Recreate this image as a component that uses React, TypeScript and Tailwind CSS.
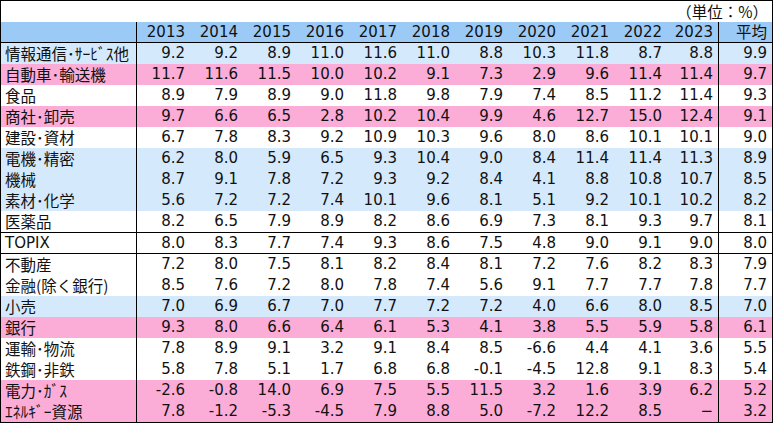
import React from "react";

type Row = { label: string; values: string[]; avg: string; bg: string };

const BLUE = "bg-[#d5e9fc]";
const PINK = "bg-[#fbadd7]";
const WHITE = "bg-white";

const years = ["2013", "2014", "2015", "2016", "2017", "2018", "2019", "2020", "2021", "2022", "2023"];

const topRows: Row[] = [
  { label: "情報通信･ｻｰﾋﾞｽ他", values: ["9.2", "9.2", "8.9", "11.0", "11.6", "11.0", "8.8", "10.3", "11.8", "8.7", "8.8"], avg: "9.9", bg: BLUE },
  { label: "自動車･輸送機", values: ["11.7", "11.6", "11.5", "10.0", "10.2", "9.1", "7.3", "2.9", "9.6", "11.4", "11.4"], avg: "9.7", bg: PINK },
  { label: "食品", values: ["8.9", "7.9", "8.9", "9.0", "11.8", "9.8", "7.9", "7.4", "8.5", "11.2", "11.4"], avg: "9.3", bg: WHITE },
  { label: "商社･卸売", values: ["9.7", "6.6", "6.5", "2.8", "10.2", "10.4", "9.9", "4.6", "12.7", "15.0", "12.4"], avg: "9.1", bg: PINK },
  { label: "建設･資材", values: ["6.7", "7.8", "8.3", "9.2", "10.9", "10.3", "9.6", "8.0", "8.6", "10.1", "10.1"], avg: "9.0", bg: WHITE },
  { label: "電機･精密", values: ["6.2", "8.0", "5.9", "6.5", "9.3", "10.4", "9.0", "8.4", "11.4", "11.4", "11.3"], avg: "8.9", bg: BLUE },
  { label: "機械", values: ["8.7", "9.1", "7.8", "7.2", "9.3", "9.2", "8.4", "4.1", "8.8", "10.8", "10.7"], avg: "8.5", bg: BLUE },
  { label: "素材･化学", values: ["5.6", "7.2", "7.2", "7.4", "10.1", "9.6", "8.1", "5.1", "9.2", "10.1", "10.2"], avg: "8.2", bg: BLUE },
  { label: "医薬品", values: ["8.2", "6.5", "7.9", "8.9", "8.2", "8.6", "6.9", "7.3", "8.1", "9.3", "9.7"], avg: "8.1", bg: WHITE },
];

const topix: Row = { label: "TOPIX", values: ["8.0", "8.3", "7.7", "7.4", "9.3", "8.6", "7.5", "4.8", "9.0", "9.1", "9.0"], avg: "8.0", bg: WHITE };

const bottomRows: Row[] = [
  { label: "不動産", values: ["7.2", "8.0", "7.5", "8.1", "8.2", "8.4", "8.1", "7.2", "7.6", "8.2", "8.3"], avg: "7.9", bg: WHITE },
  { label: "金融(除く銀行)", values: ["8.5", "7.6", "7.2", "8.0", "7.8", "7.4", "5.6", "9.1", "7.7", "7.7", "7.8"], avg: "7.7", bg: WHITE },
  { label: "小売", values: ["7.0", "6.9", "6.7", "7.0", "7.7", "7.2", "7.2", "4.0", "6.6", "8.0", "8.5"], avg: "7.0", bg: BLUE },
  { label: "銀行", values: ["9.3", "8.0", "6.6", "6.4", "6.1", "5.3", "4.1", "3.8", "5.5", "5.9", "5.8"], avg: "6.1", bg: PINK },
  { label: "運輸･物流", values: ["7.8", "8.9", "9.1", "3.2", "9.1", "8.4", "8.5", "-6.6", "4.4", "4.1", "3.6"], avg: "5.5", bg: WHITE },
  { label: "鉄鋼･非鉄", values: ["5.8", "7.8", "5.1", "1.7", "6.8", "6.8", "-0.1", "-4.5", "12.8", "9.1", "8.3"], avg: "5.4", bg: WHITE },
  { label: "電力･ｶﾞｽ", values: ["-2.6", "-0.8", "14.0", "6.9", "7.5", "5.5", "11.5", "3.2", "1.6", "3.9", "6.2"], avg: "5.2", bg: PINK },
  { label: "ｴﾈﾙｷﾞｰ資源", values: ["7.8", "-1.2", "-5.3", "-4.5", "7.9", "8.8", "5.0", "-7.2", "12.2", "8.5", "−"], avg: "3.2", bg: PINK },
];

// Japanese labels and Latin digits use different faces, like the Excel original
const JP = "font-['Noto_Sans_CJK_JP',sans-serif] text-[15.5px]";
const NUM = "font-['DejaVu_Sans','Noto_Sans_CJK_JP',sans-serif] text-[15px]";

function DataRow({ row, h = "h-[21px]", extra = "" }: { row: Row; h?: string; extra?: string }) {
  return (
    <div className={`flex ${h} ${row.bg} ${extra} leading-none text-[#111]`}>
      <div className={`w-[136px] shrink-0 border-r border-black pl-[4px] flex items-center ${row.label === "TOPIX" ? NUM : JP}`}>
        {row.label}
      </div>
      {row.values.map((v, i) => (
        <div
          key={i}
          className={`${i === 10 ? "w-[52px] border-r border-black" : "w-[53px]"} shrink-0 flex items-center justify-end pr-[5px] ${NUM}`}
        >
          {v}
        </div>
      ))}
      <div className={`w-[53px] shrink-0 flex items-center justify-end pr-[5px] ${NUM}`}>{row.avg}</div>
    </div>
  );
}

export default function App() {
  return (
    <div className="w-[773px] h-[423px] border border-black bg-white overflow-hidden">
      <div className={`h-[21px] flex items-center justify-end pr-[4px] text-[#111] ${JP}`}>（単位：%）</div>
      <div className="flex h-[21px] bg-[#9ccaf6] border-b border-black leading-none text-[#111]">
        <div className="w-[136px] shrink-0 border-r border-black" />
        {years.map((y, i) => (
          <div
            key={y}
            className={`${i === 10 ? "w-[52px] border-r border-black" : "w-[53px]"} shrink-0 flex items-center justify-end pr-[5px] ${NUM}`}
          >
            {y}
          </div>
        ))}
        <div className={`w-[53px] shrink-0 flex items-center justify-end pr-[5px] ${JP}`}>平均</div>
      </div>
      {topRows.map((r) => (
        <DataRow key={r.label} row={r} />
      ))}
      <DataRow row={topix} h="h-[22px]" extra="border-y border-black" />
      {bottomRows.map((r) => (
        <DataRow key={r.label} row={r} />
      ))}
    </div>
  );
}
